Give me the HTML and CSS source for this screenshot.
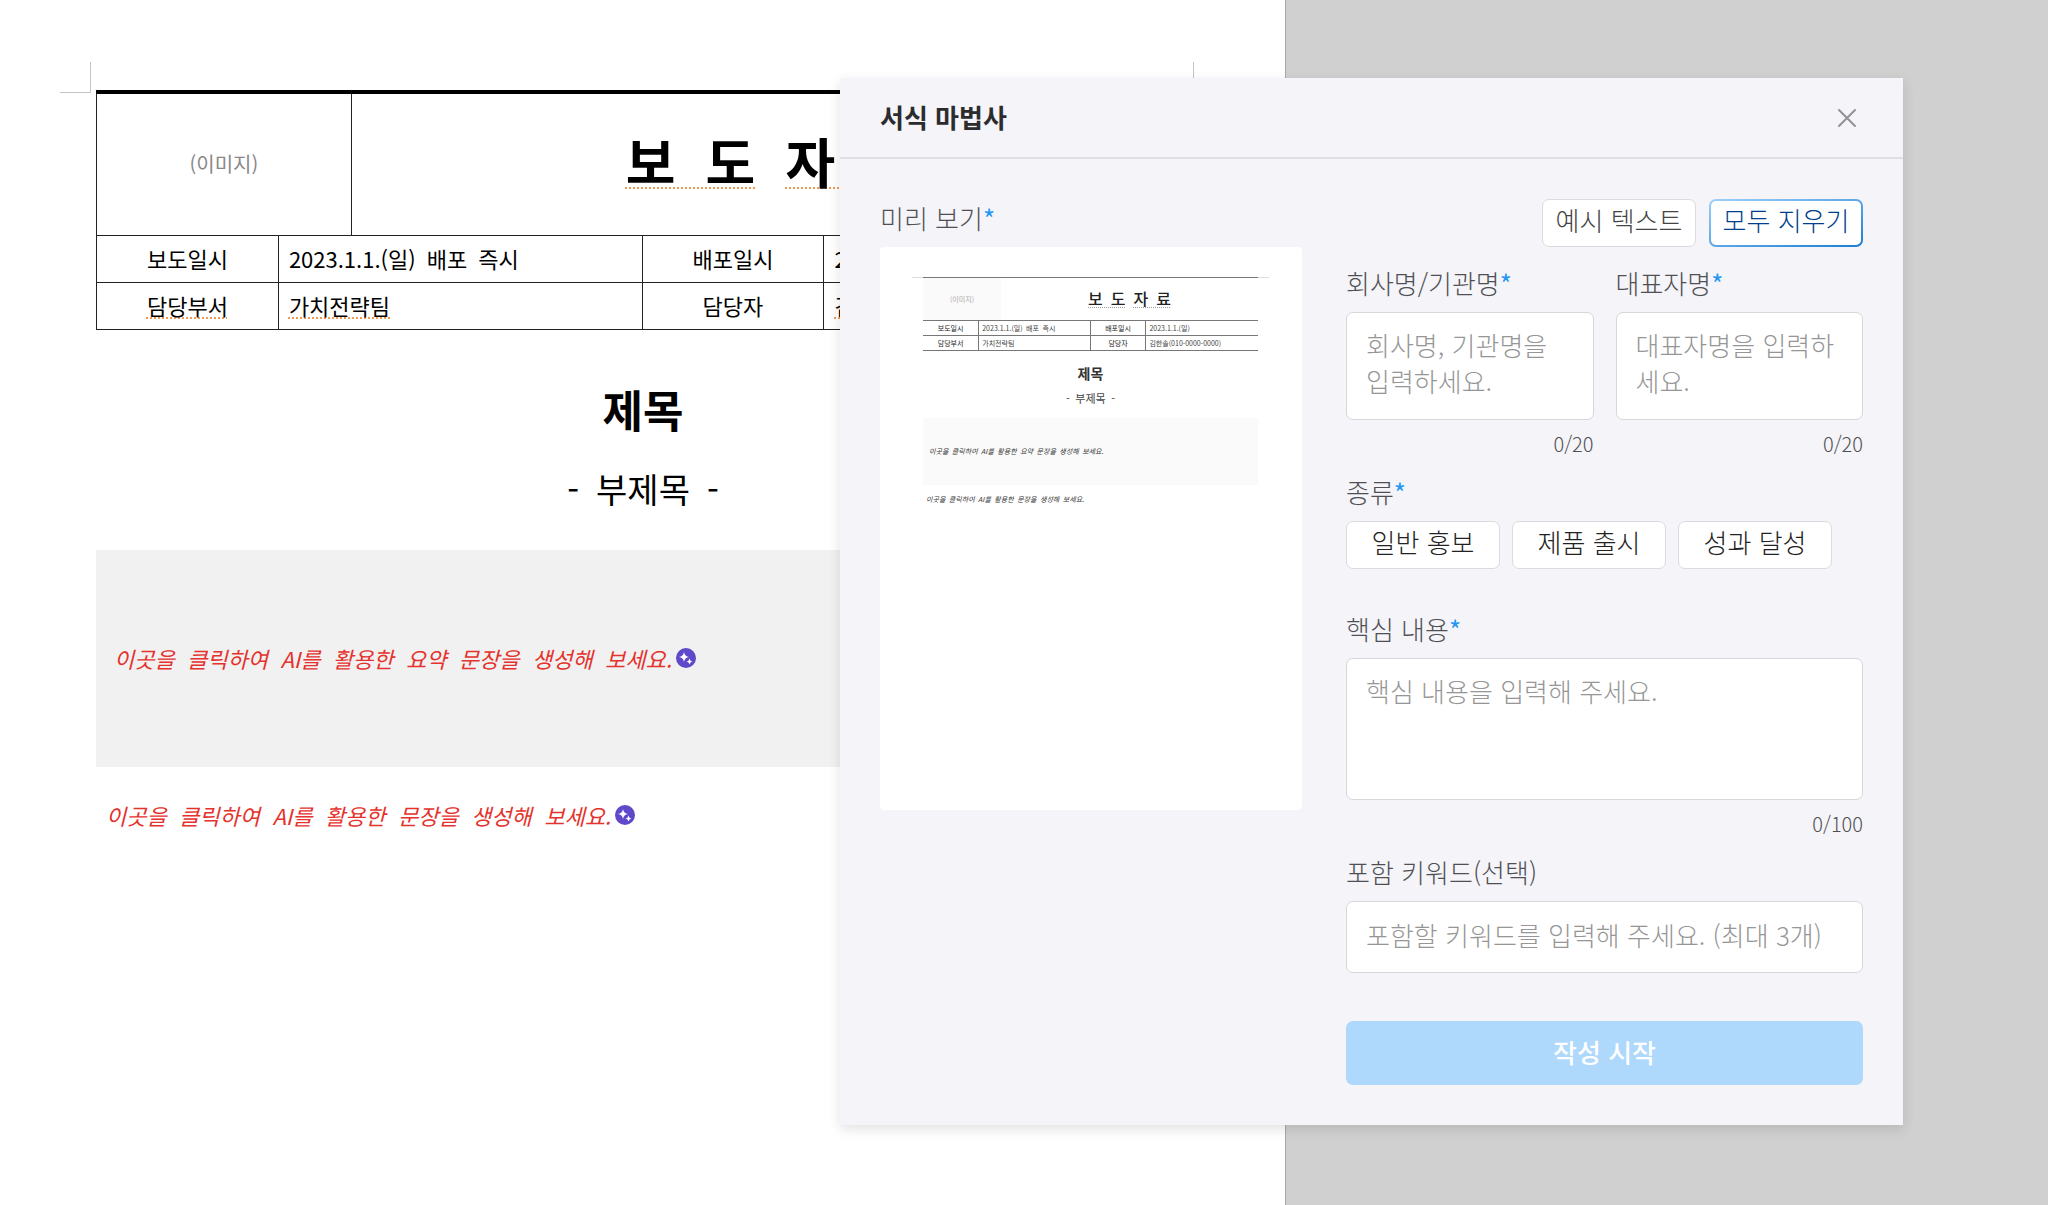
FILE: index.html
```html
<!DOCTYPE html>
<html lang="ko">
<head>
<meta charset="utf-8">
<meta name="viewport" content="width=device-width, initial-scale=1">
<title>서식 마법사</title>
<link rel="stylesheet" href="styles.css">
</head>
<body>
<svg class="sprite" aria-hidden="true">
  <symbol id="ai-spark" viewBox="0 0 20 20">
    <circle cx="10" cy="10" r="10" fill="#5f48c9"/>
    <path fill="#fff" d="M8 4 Q8.700 8.300 13 9 Q8.700 9.700 8 14 Q7.300 9.700 3 9 Q7.300 8.300 8 4Z"/>
    <path fill="#fff" d="M13.500 10.500 Q13.900 13.100 16.500 13.500 Q13.900 13.900 13.500 16.500 Q13.100 13.900 10.500 13.500 Q13.100 13.100 13.500 10.500Z"/>
  </symbol>
</svg>

<div class="workspace">
  <main class="paper">
    <table class="release">
      <colgroup><col class="c-label"><col class="c-logo"><col class="c-value"><col class="c-label"><col class="c-last"></colgroup>
      <tr class="release-head">
        <td colspan="2" class="image-slot">(이미지)</td>
        <td colspan="3" class="release-title"><span class="spell">보&nbsp;&nbsp;도</span>&nbsp;&nbsp;<span class="spell">자&nbsp;&nbsp;료</span></td>
      </tr>
      <tr>
        <th scope="row">보도일시</th>
        <td colspan="2">2023.1.1.(일)&ensp;배포&ensp;즉시</td>
        <th scope="row">배포일시</th>
        <td>2023.1.1.</td>
      </tr>
      <tr>
        <th scope="row"><span class="spell">담당부서</span></th>
        <td colspan="2"><span class="spell">가치전략팀</span></td>
        <th scope="row">담당자</th>
        <td><span class="spell">김한솔</span></td>
      </tr>
    </table>
    <h1 class="doc-title">제목</h1>
    <p class="doc-subtitle">-&ensp;부제목&ensp;-</p>
    <div class="summary">
      <p class="ai-hint">이곳을&ensp;&hairsp;클릭하여&ensp;&hairsp;AI를&ensp;&hairsp;활용한&ensp;&hairsp;요약&ensp;&hairsp;문장을&ensp;&hairsp;생성해&ensp;&hairsp;보세요.<svg class="spark"><use href="#ai-spark"/></svg></p>
    </div>
    <p class="ai-hint body-hint">이곳을&ensp;&hairsp;클릭하여&ensp;&hairsp;AI를&ensp;&hairsp;활용한&ensp;&hairsp;문장을&ensp;&hairsp;생성해&ensp;&hairsp;보세요.<svg class="spark"><use href="#ai-spark"/></svg></p>
  </main>
  <div class="gutter"></div>
</div>

<section class="dialog" role="dialog" aria-labelledby="wizard-title">
  <header class="dialog-head">
    <h2 id="wizard-title" class="dialog-title">서식 마법사</h2>
    <button type="button" class="close" aria-label="닫기">
      <svg width="20" height="20" viewBox="0 0 20 20"><path d="M2 2 18 18M18 2 2 18" fill="none" stroke="#929296" stroke-width="2" stroke-linecap="round"/></svg>
    </button>
  </header>
  <div class="dialog-body">
    <div class="preview">
      <h3 class="label">미리 보기<span class="req">*</span></h3>
      <div class="sheet">
        <table class="mini">
          <colgroup><col class="c-label"><col class="c-logo"><col class="c-value"><col class="c-label"><col class="c-last"></colgroup>
          <tr class="mini-head">
            <td colspan="2" class="mini-image">(이미지)</td>
            <td colspan="3" class="mini-title"><span class="mini-spell">보&ensp;도</span>&ensp;<span class="mini-spell">자&ensp;료</span></td>
          </tr>
          <tr>
            <th scope="row">보도일시</th>
            <td colspan="2">2023.1.1.(일)&ensp;배포&ensp;즉시</td>
            <th scope="row">배포일시</th>
            <td>2023.1.1.(일)</td>
          </tr>
          <tr>
            <th scope="row">담당부서</th>
            <td colspan="2">가치전략팀</td>
            <th scope="row">담당자</th>
            <td>김한솔(010-0000-0000)</td>
          </tr>
        </table>
        <p class="mini-heading">제목</p>
        <p class="mini-sub">-&ensp;부제목&ensp;-</p>
        <div class="mini-summary"><p class="mini-hint">이곳을&ensp;클릭하여&ensp;AI를&ensp;활용한&ensp;요약&ensp;문장을&ensp;생성해&ensp;보세요.</p></div>
        <p class="mini-hint mini-body">이곳을&ensp;클릭하여&ensp;AI를&ensp;활용한&ensp;문장을&ensp;생성해&ensp;보세요.</p>
      </div>
    </div>

    <form class="form">
      <div class="actions">
        <button type="button" class="btn btn-sample">예시 텍스트</button>
        <button type="button" class="btn btn-clear">모두 지우기</button>
      </div>
      <div class="pair">
        <div class="field">
          <label class="label" for="company">회사명/기관명<span class="req">*</span></label>
          <textarea id="company" class="box" rows="2" maxlength="20" placeholder="회사명, 기관명을 입력하세요."></textarea>
          <p class="count">0/20</p>
        </div>
        <div class="field">
          <label class="label" for="ceo">대표자명<span class="req">*</span></label>
          <textarea id="ceo" class="box" rows="2" maxlength="20" placeholder="대표자명을 입력하세요."></textarea>
          <p class="count">0/20</p>
        </div>
      </div>
      <fieldset class="kinds">
        <legend class="label">종류<span class="req">*</span></legend>
        <div class="kind-row">
          <button type="button" class="btn">일반 홍보</button>
          <button type="button" class="btn">제품 출시</button>
          <button type="button" class="btn">성과 달성</button>
        </div>
      </fieldset>
      <div class="field">
        <label class="label" for="core">핵심 내용<span class="req">*</span></label>
        <textarea id="core" class="box box-tall" rows="3" maxlength="100" placeholder="핵심 내용을 입력해 주세요."></textarea>
        <p class="count">0/100</p>
      </div>
      <div class="field keyword">
        <label class="label" for="keywords">포함 키워드(선택)</label>
        <input id="keywords" class="box box-line" type="text" placeholder="포함할 키워드를 입력해 주세요. (최대 3개)">
      </div>
      <button type="submit" class="submit">작성 시작</button>
    </form>
  </div>
</section>
</body>
</html>
```
FILE: styles.css
```css
*, *::before, *::after { box-sizing: border-box; }

body, h1, h2, h3, p, fieldset { margin: 0; }

body {
  font-family: "Noto Sans CJK KR", sans-serif;
  color: #000;
  background: #d0d0d0;
}

button, input, textarea { font: inherit; }

.sprite { position: absolute; width: 0; height: 0; }

/* Document behind the dialog */
.workspace { display: flex; min-height: 100vh; }
.gutter { flex: 0 0 762px; }

.paper {
  position: relative;
  flex: 1;
  min-width: 0;
  padding: 90px 95px 40px 96px;
  background: #fff;
  border-right: 1px solid #a8a8a8;
}

.paper::before, .paper::after {
  content: "";
  position: absolute;
  top: 62px;
  width: 31px;
  height: 31px;
  border-bottom: 1px solid #c4c4c4;
}
.paper::before { left: 60px; border-right: 1px solid #c4c4c4; }
.paper::after { right: 61px; border-left: 1px solid #c4c4c4; }

.release, .mini {
  width: 100%;
  table-layout: fixed;
  border-collapse: collapse;
}
.c-label { width: 16.64%; }
.c-logo { width: 6.67%; }
.c-value { width: 26.6%; }
.c-last { width: 33.45%; }

.release { border-top: 4px solid #000; }
.release th, .release td {
  height: 47px;
  padding: 0 10px 2px;
  border: 1px solid #222;
  font-size: 22px;
  line-height: 32px;
  font-weight: 400;
  text-align: left;
  white-space: nowrap;
}
.release th { text-align: center; }
.release .release-head td {
  height: 143px;
  border-top: 4px solid #000;
  text-align: center;
}
.release .image-slot { padding-bottom: 0; font-size: 20px; color: #888; }
.release .release-title {
  padding-bottom: 6px;
  font-size: 54px;
  line-height: 72px;
  font-weight: 700;
}

.spell {
  text-decoration: underline dotted #ee9a55 2px;
  text-underline-offset: 3px;
  text-decoration-skip-ink: none;
}

.doc-title {
  margin-top: 49px;
  font-size: 44px;
  line-height: 60px;
  font-weight: 700;
  text-align: center;
}
.doc-subtitle {
  margin-top: 26px;
  font-size: 34px;
  line-height: 48px;
  text-align: center;
}
.summary {
  display: flex;
  align-items: center;
  margin-top: 37px;
  padding: 90px 18px 91px;
  background: #f1f1f1;
}
.ai-hint {
  display: flex;
  align-items: center;
  gap: 4px;
  font-size: 22px;
  line-height: 36px;
  font-style: italic;
  color: #e5322d;
  white-space: nowrap;
}
.body-hint { margin-top: 30px; padding-left: 10px; }
.spark { width: 20px; height: 20px; }

/* Wizard dialog */
.dialog {
  position: absolute;
  top: 78px;
  right: 145px;
  width: 1063px;
  background: #f4f4f9;
  box-shadow: 0 4px 12px rgba(0, 0, 0, .12);
}
.dialog-head {
  display: flex;
  align-items: center;
  justify-content: space-between;
  padding: 19px 46px 20px 40px;
  border-bottom: 2px solid #dfdfe4;
}
.dialog-title {
  font-size: 26px;
  line-height: 40px;
  font-weight: 700;
  color: #2c2c2f;
}
.close {
  display: flex;
  padding: 2px 0 0;
  border: 0;
  background: none;
}
.dialog-body {
  display: flex;
  gap: 44px;
  padding: 40px;
}
.preview { flex: 0 0 422px; padding-top: 1px; }

.label {
  display: block;
  margin-bottom: 11px;
  padding: 0;
  font-size: 26px;
  line-height: 36px;
  font-weight: 300;
  color: #505054;
}
.req { font-weight: 400; color: #2196f3; }

/* Small rendering of the document */
.sheet {
  height: 563px;
  padding: 30px 44px 0 43px;
  background: linear-gradient(#ddd, #ddd) 32px 30px / 357px 1px no-repeat #fff;
  border-radius: 4px;
}
.mini th, .mini td {
  height: 15px;
  padding: 0 3px;
  border: 1px solid #777;
  font-size: 7px;
  line-height: 10px;
  font-weight: 400;
  color: #444;
  text-align: left;
  white-space: nowrap;
}
.mini th { text-align: center; color: #222; }
.mini th:first-child { border-left: 0; }
.mini td:last-child { border-right: 0; }
.mini .mini-head td { height: 43px; border-left: 0; border-right: 0; text-align: center; }
.mini .mini-image { background: #fafafa; color: #aaa; }
.mini .mini-title {
  padding-bottom: 2px;
  font-size: 16px;
  line-height: 24px;
  font-weight: 500;
  color: #222;
}
.mini-spell {
  text-decoration: underline dotted #999 1px;
  text-underline-offset: 2px;
  text-decoration-skip-ink: none;
}
.mini-heading {
  margin-top: 12px;
  font-size: 14px;
  line-height: 20px;
  font-weight: 700;
  color: #333;
  text-align: center;
}
.mini-sub {
  margin-top: 7px;
  font-size: 11px;
  line-height: 16px;
  color: #444;
  text-align: center;
}
.mini-summary {
  margin-top: 12px;
  padding: 27px 6px 28px;
  background: #fafafa;
}
.mini-hint {
  font-size: 7px;
  line-height: 12px;
  font-style: italic;
  color: #333;
  white-space: nowrap;
}
.mini-body { margin-top: 8px; padding-left: 3px; }

/* Form */
.form { flex: 1; min-width: 0; }
.actions {
  display: flex;
  justify-content: flex-end;
  gap: 13px;
  margin-bottom: 18px;
}
.btn {
  width: 154px;
  height: 48px;
  padding: 0 0 6px;
  border: 1px solid #dadadf;
  border-radius: 7px;
  background: #fff;
  font-size: 26px;
  line-height: 36px;
  font-weight: 300;
  color: #222;
  white-space: nowrap;
}
.btn-sample { color: #444; }
.btn-clear {
  border: 2px solid transparent;
  background: linear-gradient(#fff, #fff) padding-box,
    linear-gradient(to bottom right, #9fd0fa, #1a7fd4) border-box;
  color: #003f8a;
}
.pair {
  display: grid;
  grid-template-columns: 1fr 1fr;
  gap: 22px;
}
.box {
  display: block;
  width: 100%;
  margin: 0;
  padding: 14px 19px 20px;
  border: 1px solid #d6d6db;
  border-radius: 7px;
  background: #fff;
  font-size: 26px;
  line-height: 36px;
  font-weight: 300;
  color: #222;
  resize: none;
  overflow: hidden;
}
.box::placeholder { color: #969696; opacity: 1; }
.box-tall { height: 142px; }
.box-line { height: 72px; }
.count {
  margin-top: 10px;
  font-size: 20px;
  line-height: 28px;
  font-weight: 300;
  color: #505054;
  text-align: right;
}
.kinds {
  margin: 16px 0 42px;
  padding: 0;
  border: 0;
}
.kind-row { display: flex; gap: 12px; }
.keyword { margin-top: 16px; }
.submit {
  display: block;
  width: 100%;
  height: 64px;
  margin-top: 48px;
  padding: 0 0 4px;
  border: 0;
  border-radius: 7px;
  background: #aed8fc;
  font-size: 26px;
  font-weight: 500;
  color: #fff;
}
```
